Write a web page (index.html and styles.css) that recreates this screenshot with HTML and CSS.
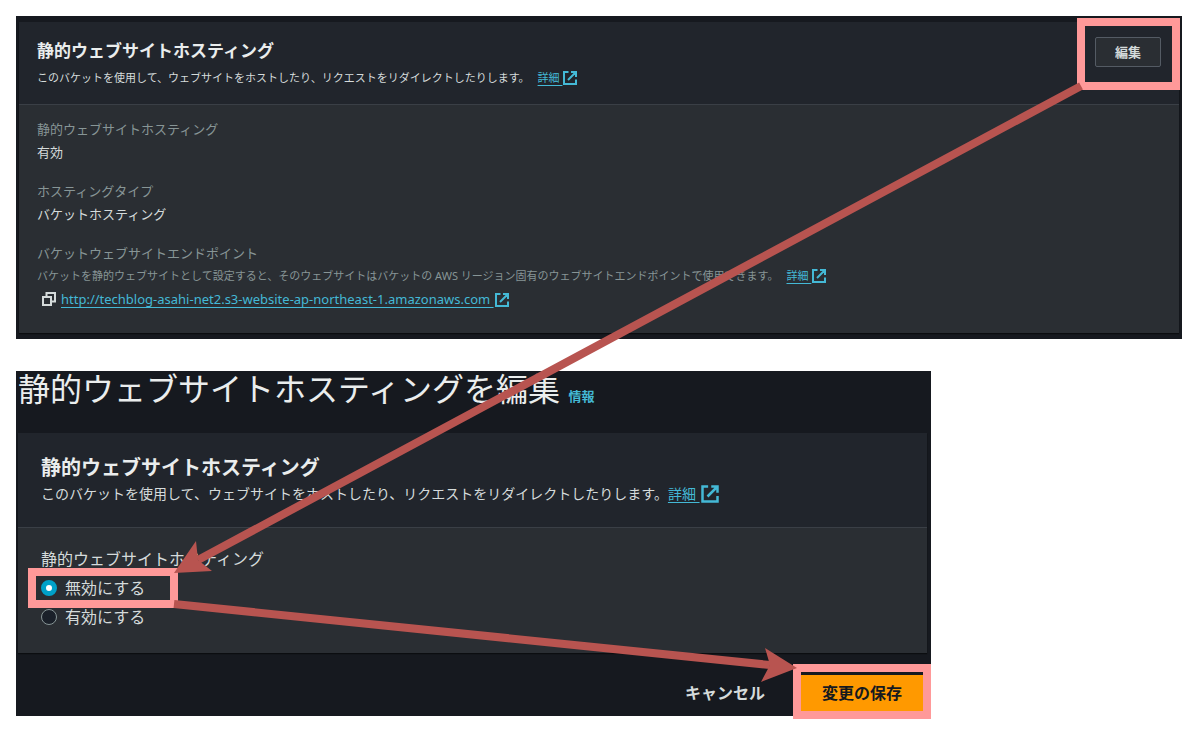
FILE: index.html
```html
<!DOCTYPE html>
<html lang="ja">
<head>
    <meta charset="utf-8" />
    <meta name="viewport" content="width=device-width, initial-scale=1" />
    <title>静的ウェブサイトホスティングを編集</title>
    <link rel="stylesheet" href="styles.css">
</head>
<body>
    <svg width="0" height="0" class="sprite" aria-hidden="true">
        <symbol id="external" viewBox="0 0 16 16">
            <path d="M6.5 2H2v12h12V9.500M9 2h5v5M14 2L6 10" fill="none" stroke="currentColor" stroke-width="2" />
        </symbol>
        <symbol id="copy" viewBox="0 0 16 16">
            <path d="M2 6h8v8H2zM5.500 6V2H14v8.500h-4" fill="none" stroke="currentColor" stroke-width="2" />
        </symbol>
    </svg>

    <main class="page">
        <section class="screen">
            <div class="panel">
                <header class="panel-header">
                    <div class="heading">
                        <h2>静的ウェブサイトホスティング</h2>
                        <p class="desc">このバケットを使用して、ウェブサイトをホストしたり、リクエストをリダイレクトしたりします。<a href="#" class="link">詳細 <svg class="icon"><use href="#external" /></svg></a></p>
                    </div>
                    <div class="mark mark-edit">
                        <button type="button" class="edit-btn">編集</button>
                    </div>
                </header>
                <dl class="panel-body props">
                    <div>
                        <dt>静的ウェブサイトホスティング</dt>
                        <dd>有効</dd>
                    </div>
                    <div>
                        <dt>ホスティングタイプ</dt>
                        <dd>バケットホスティング</dd>
                    </div>
                    <div>
                        <dt>バケットウェブサイトエンドポイント</dt>
                        <dd class="hint">バケットを静的ウェブサイトとして設定すると、そのウェブサイトはバケットの AWS リージョン固有のウェブサイトエンドポイントで使用できます。<a href="#" class="link">詳細 <svg class="icon"><use href="#external" /></svg></a></dd>
                        <dd class="endpoint">
                            <button type="button" class="copy-btn" aria-label="コピー"><svg class="icon"><use href="#copy" /></svg></button>
                            <a href="#" class="link">http://techblog-asahi-net2.s3-website-ap-northeast-1.amazonaws.com <svg class="icon"><use href="#external" /></svg></a>
                        </dd>
                    </div>
                </dl>
            </div>
        </section>

        <form class="screen screen-edit">
            <h1>静的ウェブサイトホスティングを編集 <a href="#" class="info">情報</a></h1>
            <div class="panel">
                <header class="panel-header">
                    <div class="heading">
                        <h2>静的ウェブサイトホスティング</h2>
                        <p class="desc">このバケットを使用して、ウェブサイトをホストしたり、リクエストをリダイレクトしたりします。<a href="#" class="link">詳細 <svg class="icon"><use href="#external" /></svg></a></p>
                    </div>
                </header>
                <fieldset class="panel-body options">
                    <legend>静的ウェブサイトホスティング</legend>
                    <div class="mark mark-option">
                        <label><input type="radio" name="hosting" checked />無効にする</label>
                    </div>
                    <div>
                        <label><input type="radio" name="hosting" />有効にする</label>
                    </div>
                </fieldset>
            </div>
            <div class="actions">
                <button type="button" class="cancel-btn">キャンセル</button>
                <div class="mark mark-save">
                    <button type="submit" class="save-btn">変更の保存</button>
                </div>
            </div>
        </form>

        <!-- 操作手順の矢印 -->
        <svg class="arrows" width="1200" height="735" aria-hidden="true">
            <path d="M1081 86L198 560M174 604L770 665" stroke="#b85450" stroke-width="8" />
            <path d="M174 573L196 541L198 560L212 571ZM797 668L765 648L770 665L761 682Z" fill="#b85450" />
        </svg>
    </main>
</body>
</html>
```
FILE: styles.css
```css
* {
    box-sizing: border-box;
}
body {
    margin: 0;
    background: #fff;
    color: #d5dbdb;
    font-family: "Noto Sans", "Noto Sans CJK JP", sans-serif;
    font-size: 13px;
    line-height: 20px;
}
h1, h2, p, dl, dd {
    margin: 0;
}
button {
    font: inherit;
    font-weight: bold;
    color: inherit;
    padding: 0;
    border: none;
    background: none;
    cursor: pointer;
}
.sprite {
    position: absolute;
}
.page {
    position: relative;
    display: flex;
    flex-direction: column;
    gap: 32px;
    padding: 16px 18px 16px 16px;
}
.screen {
    padding: 6px 3px;
    background: #16191f;
}
.panel {
    background: #2a2e33;
    box-shadow: 0 1px 1px #0b0d10;
}
.panel-header {
    display: flex;
    justify-content: space-between;
    align-items: flex-start;
    padding: 15px 18px 16px;
    background: #21252c;
    border-bottom: 1px solid #3a3f46;
}
.heading {
    padding-top: 2px;
}
h2 {
    font-size: 17px;
    line-height: 24px;
    color: #eaeded;
}
.desc {
    margin-top: 5px;
    font-size: 11px;
}
.link {
    margin-left: 8px;
    color: #44b9d6;
    text-decoration: underline;
    text-underline-offset: 3px;
}
.icon {
    width: 16px;
    height: 16px;
    vertical-align: -4px;
}
.panel-body {
    padding: 14px 18px 24px;
}
.props {
    display: flex;
    flex-direction: column;
    gap: 19px;
}
dt {
    color: #879596;
}
dd {
    margin-top: 3px;
}
.hint {
    font-size: 11px;
    color: #879596;
}
.endpoint {
    display: flex;
    align-items: center;
    padding-left: 4px;
    gap: 4px;
}
.endpoint .link {
    margin-left: 0;
}
.copy-btn {
    display: flex;
}
.edit-btn {
    width: 66px;
    height: 30px;
    border: 1px solid #545b64;
    border-radius: 2px;
    background: #2a2e33;
}

/* 強調枠 */
.mark {
    position: relative;
}
.mark::after {
    content: "";
    position: absolute;
    border: 8px solid #ff9999;
    pointer-events: none;
}
.mark-edit::after {
    inset: -19px -19px -23px -18px;
}
.mark-option::after {
    inset: -9px -33px;
    left: -13px;
}
.mark-save::after {
    inset: -11px -8px -8px;
}

.screen-edit {
    width: 100%;
    max-width: 915px;
    padding: 0 4px 5px 2px;
}
h1 {
    margin-bottom: 19px;
    font-size: 32px;
    font-weight: normal;
    line-height: 36px;
    color: #eaeded;
}
.info {
    font-size: 13px;
    font-weight: bold;
    color: #44b9d6;
    text-decoration: none;
}
.screen-edit .panel-header {
    padding: 21px 23px 23px;
}
.screen-edit h2 {
    font-size: 20px;
}
.screen-edit .desc {
    margin-top: 4px;
    font-size: 14px;
}
.screen-edit .link {
    margin-left: 0;
}
.screen-edit .icon {
    width: 20px;
    height: 20px;
    vertical-align: -5px;
}
.options {
    display: flex;
    flex-direction: column;
    align-items: flex-start;
    gap: 7px;
    margin: 0;
    padding: 20px 23px 25px;
    border: none;
    font-size: 16px;
    line-height: 22px;
}
legend {
    float: left;
    padding: 0;
}
.options label {
    display: flex;
    align-items: center;
    gap: 8px;
}
.options input {
    appearance: none;
    width: 16px;
    height: 16px;
    margin: 0;
    border: 1px solid #879596;
    border-radius: 50%;
    background: #1a2029;
}
.options input:checked {
    border: 5px solid #00a1c9;
    background: #fff;
}
.actions {
    display: flex;
    justify-content: flex-end;
    align-items: center;
    gap: 36px;
    padding: 22px 4px 0 0;
    font-size: 16px;
}
.save-btn {
    width: 122px;
    height: 36px;
    background: #ff9900;
    color: #16191f;
}
.arrows {
    position: absolute;
    top: 0;
    left: 0;
    pointer-events: none;
}
```
